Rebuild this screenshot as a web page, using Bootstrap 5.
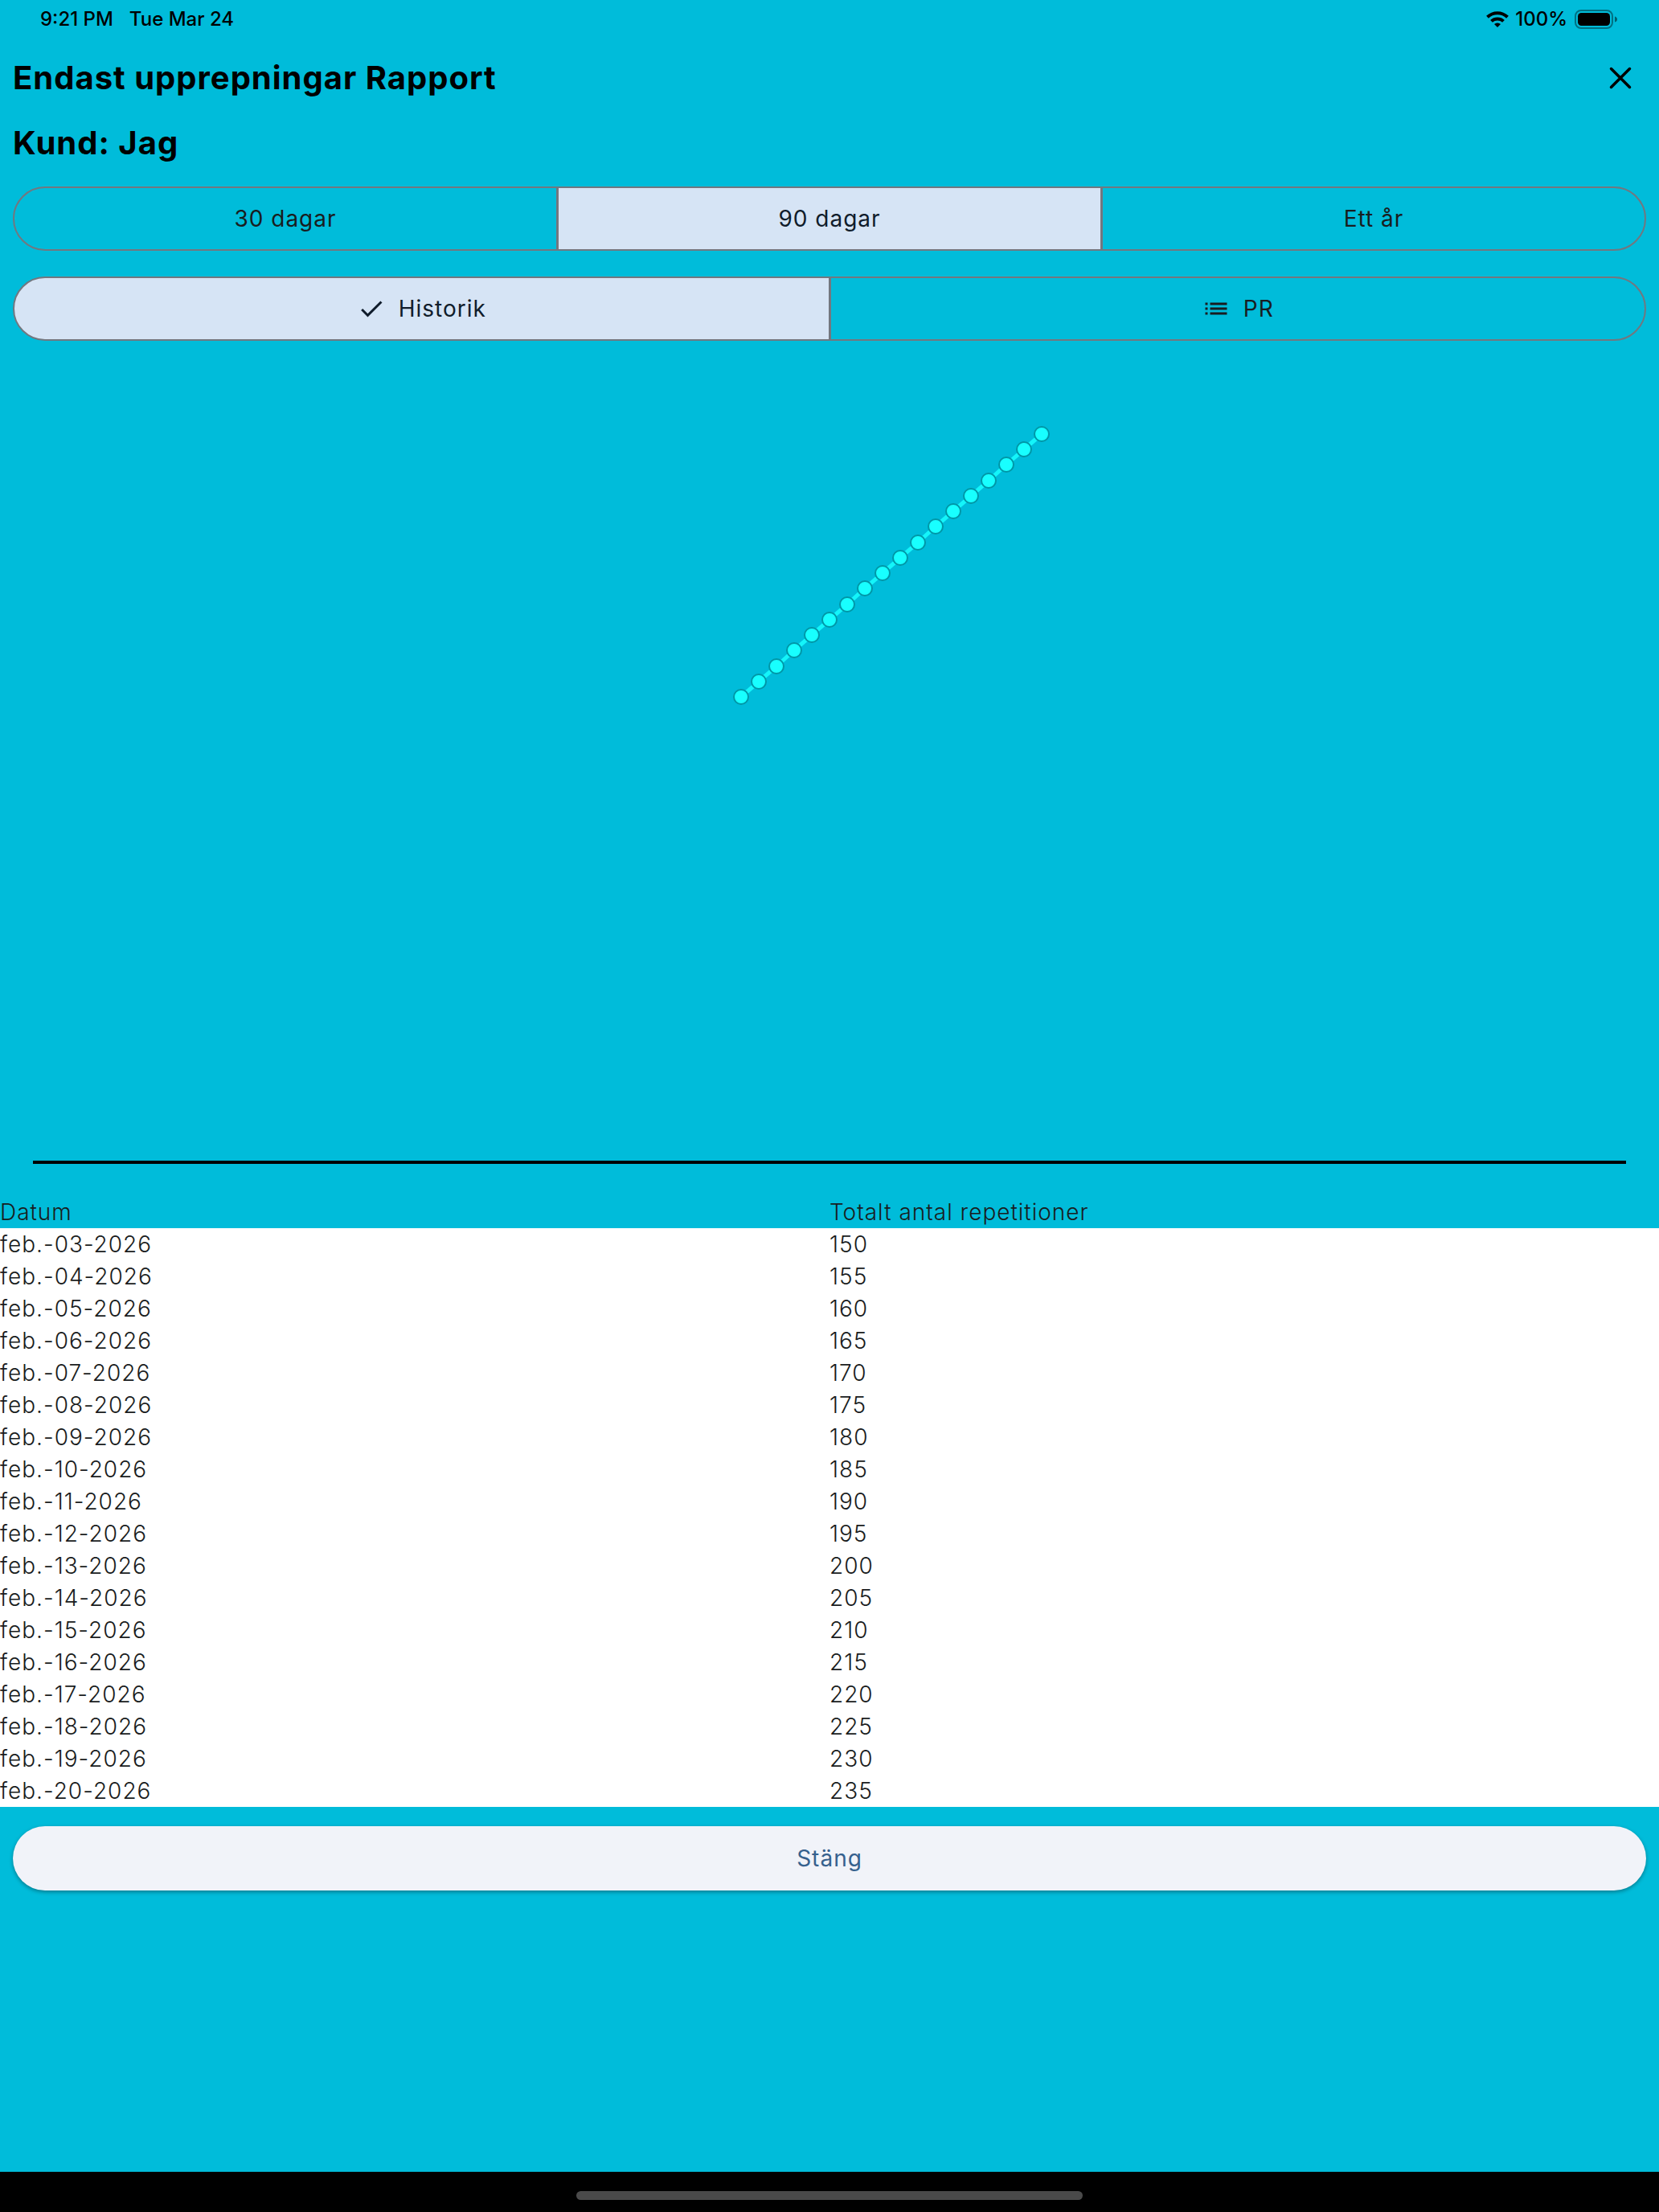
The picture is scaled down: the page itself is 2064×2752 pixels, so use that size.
<!DOCTYPE html>
<html lang="sv">
<head>
<meta charset="utf-8">
<meta name="viewport" content="width=device-width, initial-scale=1">
<title>Endast upprepningar Rapport</title>
<link href="https://cdn.jsdelivr.net/npm/bootstrap@5.3.0/dist/css/bootstrap.min.css" rel="stylesheet">
<style>
  body { background: #00bcda; color: #191c20; font-family: Inter, "Liberation Sans", sans-serif; font-size: 28px; line-height: 40px; letter-spacing: 1px; }
  .status-bar { height: 48px; padding: 0 52px 0 50px; font-size: 24px; font-weight: 500; letter-spacing: 0; color: #000; }
  .status-left { gap: 20px; }
  .title-row { height: 98px; padding: 0 18px 0 16px; color: #000; }
  .report-title { font-size: 40px; line-height: 64px; font-weight: 700; color: #000; }
  .close-btn { width: 60px; height: 60px; }
  .segments { margin-top: 32px; }
  .report-title + .segments { margin-top: 22px; }
  .segments .btn { --bs-btn-font-size: 28px; --bs-btn-line-height: 40px; --bs-btn-font-weight: 400; --bs-btn-padding-y: 18px; --bs-btn-border-width: 2px; --bs-btn-border-radius: 40px;
    --bs-btn-color: #191c20; --bs-btn-border-color: #73777f; --bs-btn-active-bg: #d6e4f5; --bs-btn-active-color: #101c2b; --bs-btn-active-border-color: #73777f;
    --bs-btn-hover-color: #191c20; --bs-btn-hover-border-color: #73777f; flex-basis: 0; letter-spacing: 1px; }
  .segments > .btn:not(:first-of-type) { margin-left: -2px; }
  .segments svg { width: 36px; height: 36px; }
  .report-table { table-layout: fixed; --bs-table-bg: transparent; }
  .report-table th, .report-table td { padding: 0; border: 0; font-weight: 300; color: #191c20; background: transparent; box-shadow: none; }
  .report-table tbody { background: #fff; }
  .stang-btn { --bs-btn-font-size: 28px; --bs-btn-line-height: 40px; --bs-btn-font-weight: 400; --bs-btn-padding-y: 20px; --bs-btn-border-width: 0;
    --bs-btn-bg: #f1f3f9; --bs-btn-color: #36618e; --bs-btn-hover-bg: #e7ecf5; --bs-btn-hover-color: #36618e; letter-spacing: 1px; box-shadow: 0 2px 5px rgba(0, 0, 0, .35); }
  .home-area { height: 50px; padding-top: 24px; background: #000; }
  .home-pill { width: 630px; max-width: 60%; height: 11px; background: #4a4a4a; }
</style>
</head>
<body class="min-vh-100 d-flex flex-column">
<div class="status-bar d-flex align-items-center justify-content-between">
  <div class="status-left d-flex"><span>9:21 PM</span><span>Tue Mar 24</span></div>
  <div class="d-flex align-items-center gap-2">
    <svg width="28" height="22" viewBox="0 0 28 22" fill="none" stroke="#000" stroke-width="4" aria-hidden="true">
      <path d="M1.5 8.2a18 18 0 0 1 25 0"/><path d="M6.5 13.4a11 11 0 0 1 15 0"/>
      <path d="M14 21l-4-4a6 6 0 0 1 8 0z" fill="#000" stroke="none"/>
    </svg>
    <span>100%</span>
    <svg width="54" height="24" viewBox="0 0 54 24" aria-hidden="true">
      <rect x="2" y="1" width="46" height="22" rx="7" fill="none" stroke="#000" stroke-opacity=".4" stroke-width="2"/>
      <rect x="5" y="4" width="40" height="16" rx="4.5"/>
      <path d="M51 8.500q3 1 3 3.500t-3 3.500z" fill-opacity=".5"/>
    </svg>
  </div>
</div>

<main class="flex-grow-1">
  <header class="title-row d-flex align-items-center justify-content-between">
    <h1 class="report-title m-0">Endast upprepningar Rapport</h1>
    <button type="button" class="close-btn btn p-0 border-0 d-flex align-items-center justify-content-center" aria-label="Stäng rapport">
      <svg width="28" height="28" viewBox="0 0 28 28" stroke="#000" stroke-width="3.500" stroke-linecap="round" aria-hidden="true"><path d="M2.500 2.500l23 23M25.500 2.500l-23 23"/></svg>
    </button>
  </header>
  <div class="px-3">
    <h2 class="report-title m-0">Kund: Jag</h2>
    <div class="segments btn-group d-flex" role="group" aria-label="Period">
      <input type="radio" class="btn-check" name="period" id="p30"><label class="btn" for="p30">30 dagar</label>
      <input type="radio" class="btn-check" name="period" id="p90" checked><label class="btn" for="p90">90 dagar</label>
      <input type="radio" class="btn-check" name="period" id="p365"><label class="btn" for="p365">Ett år</label>
    </div>
    <div class="segments btn-group d-flex" role="group" aria-label="Vy">
      <input type="radio" class="btn-check" name="vy" id="vHist" checked>
      <label class="btn d-flex align-items-center justify-content-center gap-3" for="vHist">
        <svg viewBox="0 0 24 24" fill="currentColor" aria-hidden="true"><path d="M9 16.170L4.830 12l-1.420 1.410L9 19 21 7l-1.410-1.410z"/></svg>Historik</label>
      <input type="radio" class="btn-check" name="vy" id="vPr">
      <label class="btn d-flex align-items-center justify-content-center gap-3" for="vPr">
        <svg viewBox="0 0 24 24" fill="currentColor" aria-hidden="true"><path d="M3 13h2v-2H3v2zm0 4h2v-2H3v2zm0-8h2V7H3v2zm4 4h14v-2H7v2zm0 4h14v-2H7v2zM7 7v2h14V7H7z"/></svg>PR</label>
    </div>
  </div>

  <svg id="chart" class="d-block w-100" viewBox="0 0 2064 1064" role="img" aria-label="Totalt antal repetitioner per dag">
    <line x1="41" y1="1022" x2="2023" y2="1022" stroke="#000" stroke-width="4"/>
    <polyline id="trend" fill="none" stroke="#18ffff" stroke-opacity=".85" stroke-width="5"/>
    <g id="dots" fill="#18ffff" stroke="#0097a7" stroke-width="2"></g>
  </svg>

  <table class="report-table table m-0">
    <thead><tr><th scope="col">Datum</th><th scope="col">Totalt antal repetitioner</th></tr></thead>
    <tbody id="rows"></tbody>
  </table>
  <div class="px-3 pt-4"><button type="button" class="stang-btn btn rounded-pill w-100">Stäng</button></div>
</main>

<footer class="home-area"><div class="home-pill rounded-pill mx-auto"></div></footer>

<script src="https://cdn.jsdelivr.net/npm/bootstrap@5.3.0/dist/js/bootstrap.bundle.min.js"></script>
<script>
  const data = Array.from({ length: 18 }, (_, i) => ({ day: i + 3, reps: 150 + 5 * i }));
  const points = data.map((d, i) => [922 + 22 * i, Math.round(443 - (d.reps - 150) * 3.85)]);
  document.getElementById('trend').setAttribute('points', points.join(' '));
  document.getElementById('dots').innerHTML = points.map(([x, y]) => `<circle cx="${x}" cy="${y}" r="9"/>`).join('');
  document.getElementById('rows').innerHTML = data.map(d =>
    `<tr><td>feb.-${String(d.day).padStart(2, '0')}-2026</td><td>${d.reps}</td></tr>`).join('');
</script>
</body>
</html>
